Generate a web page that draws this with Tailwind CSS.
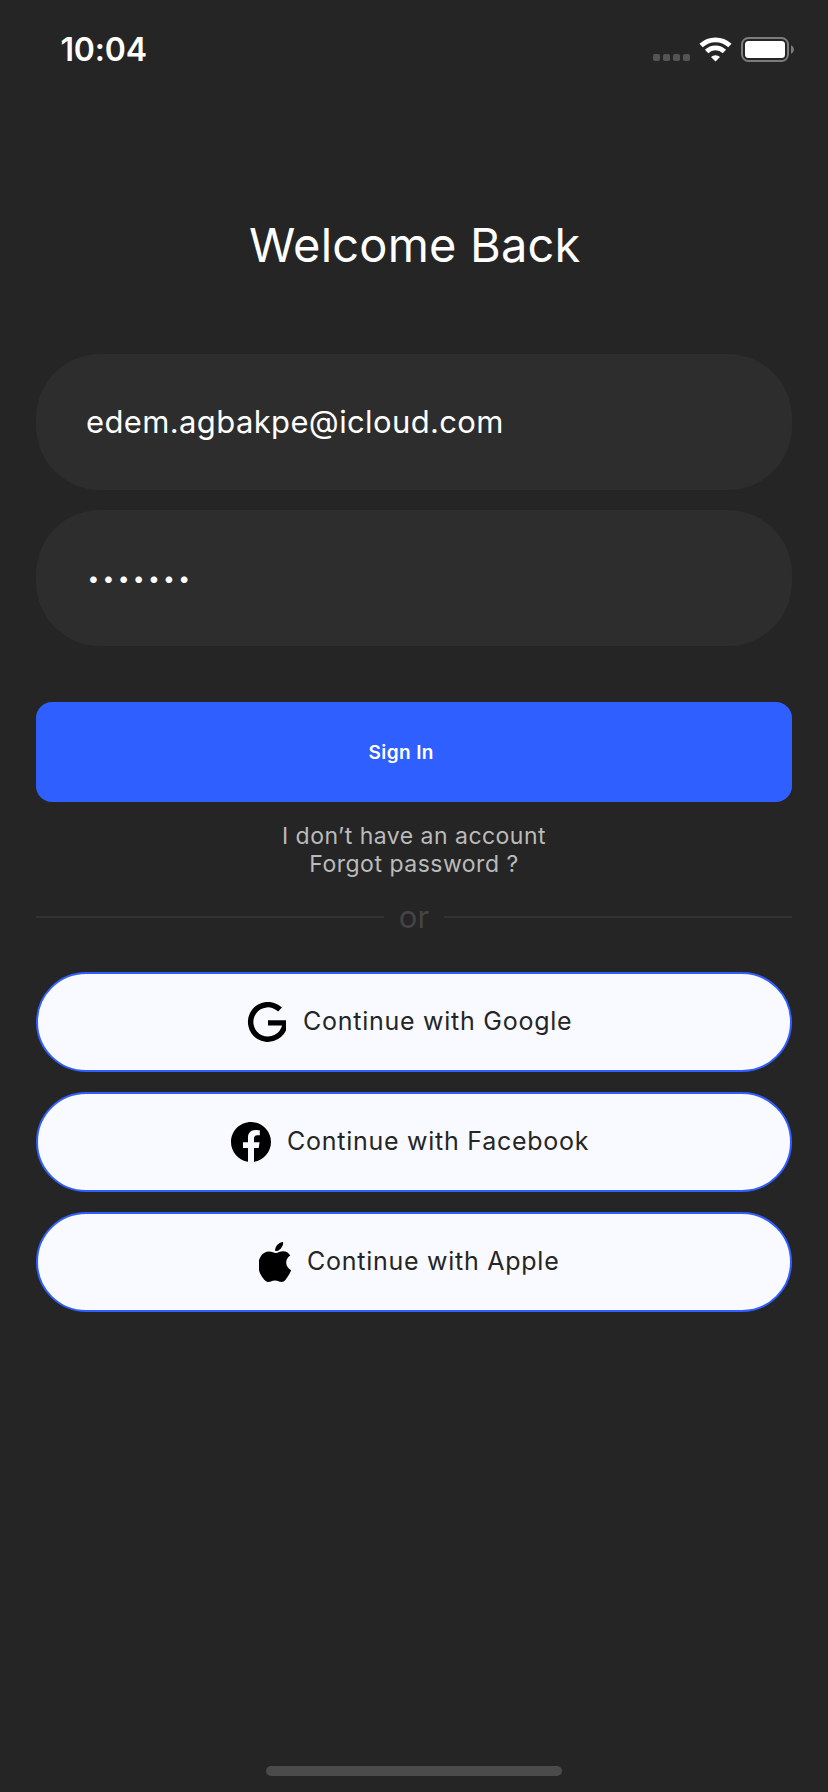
<!DOCTYPE html>
<html lang="en">
<head>
<meta charset="utf-8">
<title>Welcome Back</title>
<script src="https://cdn.jsdelivr.net/npm/@tailwindcss/browser@4"></script>
</head>
<body class="bg-[#252525] font-['Inter',sans-serif] text-white">
<div class="flex h-[1792px] w-[828px] flex-col overflow-hidden">
  <header class="flex h-[98px] shrink-0 items-center justify-between pl-[60.5px] pr-[34px]">
    <span class="pt-[2px] text-[32px] font-semibold leading-none tracking-[-0.2px]">10:04</span>
    <div class="flex items-center">
      <svg class="h-[30px] w-[142px]" viewBox="652 34 142 30" aria-hidden="true">
        <g fill="#545454">
          <rect x="653" y="54" width="7" height="7" rx="1.8"/>
          <rect x="663" y="54" width="7" height="7" rx="1.8"/>
          <rect x="673" y="54" width="7" height="7" rx="1.8"/>
          <rect x="683" y="54" width="7" height="7" rx="1.8"/>
        </g>
        <g fill="none" stroke="#fff" stroke-width="4.8">
          <path d="M701.1 45.600a20.800 20.800 0 0 1 28.800 0"/>
          <path d="M706.600 51.500a12.900 12.900 0 0 1 17.800 0"/>
        </g>
        <path d="M715.500 61.500l-4.500-4.500a6.400 6.400 0 0 1 9 0z" fill="#fff"/>
        <rect x="742" y="38" width="46" height="23" rx="6.5" fill="none" stroke="#7c7c7c" stroke-width="2"/>
        <rect x="745" y="41" width="40" height="17" rx="3.5" fill="#fff"/>
        <path d="M791 45.300c1.800.8 2.900 2.400 2.900 4.200s-1.100 3.400-2.900 4.200z" fill="#7c7c7c"/>
      </svg>
    </div>
  </header>

  <main class="flex grow flex-col px-9">
    <h1 class="mt-[117px] pl-[213px] text-[47px] leading-[60px] tracking-[0.18px] whitespace-nowrap">Welcome Back</h1>

    <div class="mt-[79px] flex flex-col gap-5">
      <div class="flex h-[136px] items-center rounded-[64px] bg-[#2d2d2d] pl-[50px] text-[31px] tracking-[0.37px]">edem.agbakpe@icloud.com</div>
      <div class="flex h-[136px] items-center rounded-[64px] bg-[#2d2d2d] pl-[51.5px] pt-[2px] text-[21px] tracking-[3.3px]">•••••••</div>
    </div>

    <button class="mt-14 flex h-[100px] shrink-0 items-center rounded-2xl bg-[#305fff] pl-[332.5px] pt-[3px] text-[19px] font-semibold tracking-[0.4px]">Sign In</button>

    <div class="mt-5 text-center text-[23px] leading-7 text-[#bbb]">
      <p class="tracking-[0.47px]">I don’t have an account</p>
      <p class="tracking-[0.5px]">Forgot password ?</p>
    </div>

    <div class="mt-[19px] flex h-10 items-center justify-between">
      <div class="h-[2px] w-[348px] bg-[#333]"></div>
      <span class="text-[31px] leading-10 text-[#444]">or</span>
      <div class="h-[2px] w-[348px] bg-[#333]"></div>
    </div>

    <div class="mt-[35px] flex flex-col gap-5 text-[25px] tracking-[0.74px] text-[#252525]">
      <button class="flex h-[100px] items-center rounded-full border-2 border-[#305fff] bg-[#f9faff] pl-[209px]">
        <svg class="h-10 w-10 shrink-0" viewBox="0 0 40 40" aria-hidden="true">
          <path d="M34.900 5.600A20 20 0 1 0 39 28.500V18.300H21v5.300h14.100A14.600 14.600 0 1 1 31.200 9.500z"/>
        </svg>
        <span class="ml-[16px]">Continue with Google</span>
      </button>
      <button class="flex h-[100px] items-center rounded-full border-2 border-[#305fff] bg-[#f9faff] pl-[193px]">
        <svg class="h-10 w-10 shrink-0" viewBox="0 0 40 40" aria-hidden="true">
          <path d="M40 20C40 8.960 31.040 0 20 0S0 8.960 0 20c0 10 7.400 18.300 17 19.800V26h-5v-5.700h5V15.600c0-4.900 3-7.600 7.400-7.600 2 0 4.400.3 4.400.3v5h-2.500c-2.400 0-3.300 1.500-3.300 3.100v3.900h5.600l-.9 5.700H23v13.800C32.600 38.300 40 30 40 20z"/>
        </svg>
        <span class="ml-[16px]">Continue with Facebook</span>
      </button>
      <button class="flex h-[100px] items-center rounded-full border-2 border-[#305fff] bg-[#f9faff] pl-[221px]">
        <svg class="h-10 w-8 shrink-0" viewBox="0 0 32 40" aria-hidden="true">
          <path d="M24.100 0c.3 2.400-.7 4.700-2.200 6.400-1.500 1.700-3.700 2.700-5.700 2.600-.3-2.300.8-4.600 2.200-6.200C19.900 1.200 22.200.1 24.100 0z"/>
          <path d="M31.300 13.600c-2.500 1.500-4.100 3.900-4.100 7 0 3.500 2.100 6.300 4.900 7.600-.6 1.800-1.400 3.500-2.500 5.100-1.600 2.300-3.600 6.600-6.800 6.700-2.800 0-3.500-1.600-6.800-1.600-3.200 0-4.200 1.600-6.700 1.600-3 .1-5.200-3.800-6.900-6.200C-1.200 28.600-1.900 19.600 2 13.900c1.900-2.800 4.900-4.500 8-4.500 3 0 4.900 1.600 7 1.600 2.100 0 3.800-1.700 7.400-1.700 2.600 0 5.300 1.500 6.900 4.300z"/>
        </svg>
        <span class="ml-[16px]">Continue with Apple</span>
      </button>
    </div>
  </main>

  <footer class="flex shrink-0 justify-center pb-4">
    <div class="h-[10px] w-[296px] rounded-full bg-[#4b4b4b]"></div>
  </footer>
</div>
</body>
</html>
